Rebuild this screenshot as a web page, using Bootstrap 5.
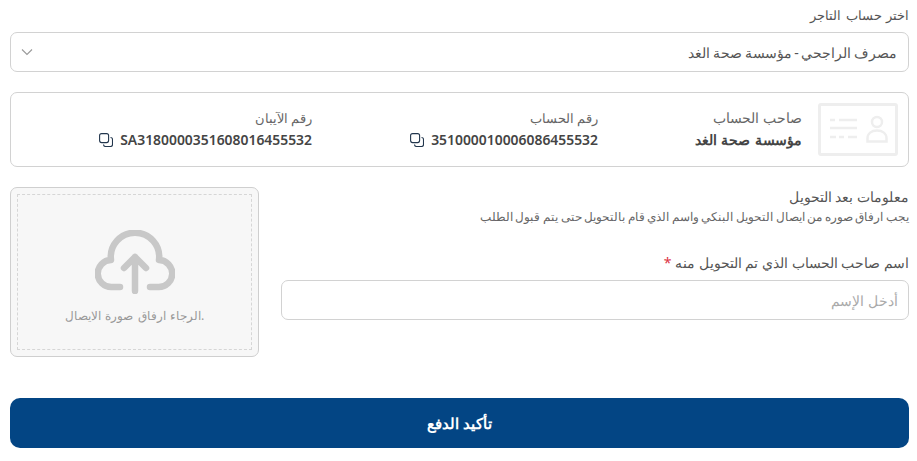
<!DOCTYPE html>
<html lang="ar" dir="rtl">
<head>
<meta charset="utf-8">
<link rel="stylesheet" href="https://cdn.jsdelivr.net/npm/bootstrap@5.3.0/dist/css/bootstrap.min.css">
<style>
html,body{height:461px;overflow:hidden;background:#fff}
body{font-family:"Noto Sans","Noto Sans CJK SC",sans-serif;color:#444;font-size:14px}
.page-wrap{padding:5px 8px 0 10px;width:917px}
.field-label{font-size:13px;line-height:20px;color:#555;margin:0 0 7px;word-spacing:1px}
.form-select.merchant{height:40px;border:1px solid #d2d2d2;border-radius:7px;padding:0 11px 0 36px;color:#555;font-size:14px;word-spacing:-1px;box-shadow:none;background-position:left 10px center;background-size:12px 12px;background-image:url("data:image/svg+xml,%3csvg xmlns='http://www.w3.org/2000/svg' viewBox='0 0 12 12'%3e%3cpath fill='none' stroke='%23999' stroke-width='1.1' d='M1 3.5l5 5 5-5'/%3e%3c/svg%3e")}
.info-box{height:75px;margin-top:20px;border:1px solid #d2d2d2;border-radius:7px;padding:10px 10px 0 6px}
.id-icon{width:80px;height:54px;flex:none}
.info-col{text-align:right;line-height:22px;padding-top:4px}
.holder-col{width:220px;padding-right:16px}
.account-col{width:286px}
.info-lbl{font-size:13.2px;color:#666}
.holder-col .info-lbl{font-size:13.8px}
.info-val{font-size:13.9px;font-weight:600;color:#444;direction:ltr;display:flex;gap:7px;justify-content:flex-end;align-items:center}
.info-val.rtl-val{direction:rtl;justify-content:flex-start;font-weight:700;font-size:14.3px;word-spacing:1px}
.section-row{margin-top:20px;gap:22px}
.form-side{flex:1}
.sec-title{font-size:14px;color:#555;line-height:20px}
.sec-sub{font-size:11.5px;color:#666;line-height:16px;margin-top:2px;word-spacing:-.4px}
.req-label{font-size:14px;color:#555;margin-top:28px;line-height:20px}
.req-label span{color:#dc3545}
.form-control.name-input{height:40px;border:1px solid #d2d2d2;border-radius:7px;margin-top:7px;padding:0 10px;font-size:14px;color:#555;box-shadow:none}
.form-control.name-input::placeholder{color:#aaa}
.upload-outer{width:249px;height:170px;flex:none;border:1px solid #cfcfcf;border-radius:7px;background:#f7f7f7;padding:6px}
.upload-inner{height:100%;border:1px dashed #d6d6d6;display:flex;flex-direction:column;align-items:center;padding-top:35px;color:#999;font-size:12.3px;word-spacing:1.3px}
.cloud{width:80px;height:64px;display:block}
.upload-text{margin-top:12px;line-height:20px}
.btn.pay-btn{height:50px;margin-top:41px;width:899px;background:#034584;color:#fff;border:0;border-radius:10px;font-size:15px;font-weight:700;display:block}
</style>
</head>
<body>
<div class="page-wrap">
  <div class="field-label">اختر حساب التاجر</div>
  <select class="form-select merchant"><option>مصرف الراجحي - مؤسسة صحة الغد</option></select>
  <div class="info-box d-flex">
    <svg class="id-icon" viewBox="0 0 80 54" fill="none" stroke="#eeeeee" stroke-width="3"><rect x="1.5" y="1.5" width="77" height="50" rx="1.5"/><path stroke-width="2.5" d="M12 17h5M21 17h18M12 25h27M12 34h6M21 34h5M30 34h9"/><circle stroke-width="2.5" cx="59" cy="19" r="5"/><path stroke-width="2.5" d="M49.5 38.5v-3c0-5 4-8 9.500-8s9.500 3 9.500 8v3z"/></svg>
    <div class="info-col holder-col">
      <div class="info-lbl">صاحب الحساب</div>
      <div class="info-val rtl-val">مؤسسة صحة الغد</div>
    </div>
    <div class="info-col account-col">
      <div class="info-lbl">رقم الحساب</div>
      <div class="info-val"><svg width="14" height="14" viewBox="0 0 14 14" fill="none" stroke="#22364d" stroke-width="1.1"><rect x=".6" y=".6" width="9" height="9" rx="2"/><path d="M11.500 4.500a2 2 0 0 1 2 2v5a2 2 0 0 1-2 2h-5a2 2 0 0 1-2-2"/></svg>351000010006086455532</div>
    </div>
    <div class="info-col flex-grow-1">
      <div class="info-lbl">رقم الآيبان</div>
      <div class="info-val"><svg width="14" height="14" viewBox="0 0 14 14" fill="none" stroke="#22364d" stroke-width="1.1"><rect x=".6" y=".6" width="9" height="9" rx="2"/><path d="M11.500 4.500a2 2 0 0 1 2 2v5a2 2 0 0 1-2 2h-5a2 2 0 0 1-2-2"/></svg>SA3180000351608016455532</div>
    </div>
  </div>
  <div class="section-row d-flex">
    <div class="form-side">
      <div class="sec-title">معلومات بعد التحويل</div>
      <div class="sec-sub">يجب ارفاق صوره من ايصال التحويل البنكي واسم الذي قام بالتحويل حتى يتم قبول الطلب</div>
      <div class="req-label">اسم صاحب الحساب الذي تم التحويل منه <span>*</span></div>
      <input class="form-control name-input" placeholder="أدخل الإسم">
    </div>
    <div class="upload-outer">
      <div class="upload-inner">
        <svg class="cloud" viewBox="0 0 80 64" fill="none" stroke="#c8c8c8" stroke-width="6.5" stroke-linecap="round" stroke-linejoin="round"><path d="M25 57H16.500A13.500 13.500 0 0 1 16 30A24.200 24.200 0 1 1 64 30A13.500 13.500 0 0 1 63.500 57H55"/><path d="M40 61V27M29 38l11-11 11 11"/></svg>
        <div class="upload-text">.الرجاء ارفاق صورة الايصال</div>
      </div>
    </div>
  </div>
  <button class="btn pay-btn">تأكيد الدفع</button>
</div>
<script src="https://cdn.jsdelivr.net/npm/bootstrap@5.3.0/dist/js/bootstrap.bundle.min.js"></script>
</body>
</html>
